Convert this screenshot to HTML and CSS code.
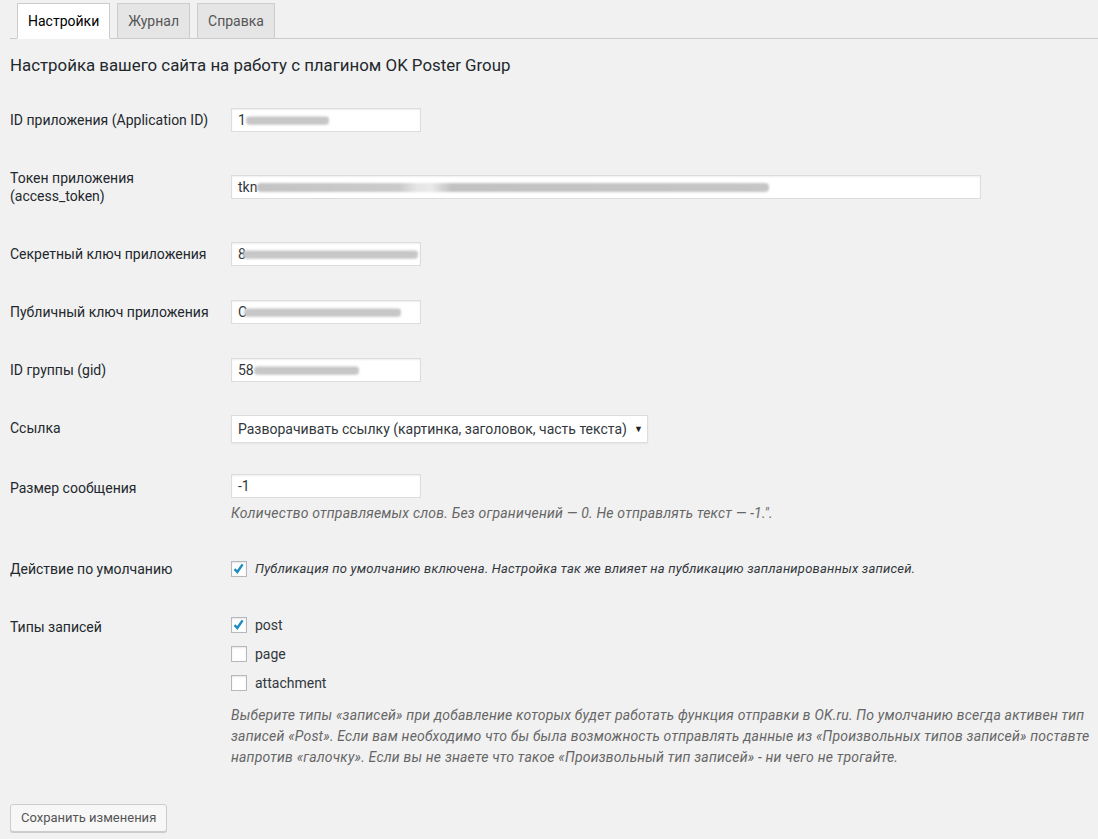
FILE: index.html
```html
<!DOCTYPE html>
<html lang="ru">
<head>
<meta charset="utf-8">
<title>OK Poster Group</title>
<link rel="stylesheet" href="styles.css">
</head>
<body>
<div class="wrap">
  <nav class="tabs">
    <a class="tab active">Настройки</a>
    <a class="tab">Журнал</a>
    <a class="tab">Справка</a>
  </nav>
  <h2 class="title">Настройка вашего сайта на работу с плагином OK Poster Group</h2>
  <table class="form-table">
    <colgroup><col class="c-th"><col></colgroup>
    <tr>
      <th class="nowrap">ID приложения (Application ID)</th>
      <td><div class="field small">1<span class="blur w83"></span></div></td>
    </tr>
    <tr>
      <th>Токен приложения (access_token)</th>
      <td><div class="field large">tkn<span class="blur w512"></span></div></td>
    </tr>
    <tr>
      <th>Секретный ключ приложения</th>
      <td><div class="field small">8<span class="blur w175 over"></span></div></td>
    </tr>
    <tr>
      <th>Публичный ключ приложения</th>
      <td><div class="field small">С<span class="blur w157 over"></span></div></td>
    </tr>
    <tr>
      <th>ID группы (gid)</th>
      <td><div class="field small">58<span class="blur w105"></span></div></td>
    </tr>
    <tr>
      <th>Ссылка</th>
      <td><div class="select">Разворачивать ссылку (картинка, заголовок, часть текста)<span class="arrow">▼</span></div></td>
    </tr>
    <tr>
      <th>Размер сообщения</th>
      <td class="top">
        <div class="field small">-1</div>
        <p class="description first">Количество отправляемых слов. Без ограничений — 0. Не отправлять текст — -1.".</p>
      </td>
    </tr>
    <tr>
      <th>Действие по умолчанию</th>
      <td>
        <label class="option">
          <span class="cb"><svg viewBox="0 0 16 16" width="16" height="16"><path d="M3.6 8.2 L6.3 11 L11.6 3.4" fill="none" stroke="#1e8cbe" stroke-width="2.4"/></svg></span>
          <span class="description inline">Публикация по умолчанию включена. Настройка так же влияет на публикацию запланированных записей.</span>
        </label>
      </td>
    </tr>
    <tr>
      <th>Типы записей</th>
      <td class="top types-cell">
        <label class="option row">
          <span class="cb"><svg viewBox="0 0 16 16" width="16" height="16"><path d="M3.6 8.2 L6.3 11 L11.6 3.4" fill="none" stroke="#1e8cbe" stroke-width="2.4"/></svg></span>
          <span>post</span>
        </label>
        <label class="option row">
          <span class="cb"></span>
          <span>page</span>
        </label>
        <label class="option row">
          <span class="cb"></span>
          <span>attachment</span>
        </label>
        <p class="description types">Выберите типы «записей» при добавление которых будет работать функция отправки в OK.ru. По умолчанию всегда активен тип записей «Post». Если вам необходимо что бы была возможность отправлять данные из «Произвольных типов записей» поставте напротив «галочку». Если вы не знаете что такое «Произвольный тип записей» - ни чего не трогайте.</p>
      </td>
    </tr>
  </table>
  <div class="submit">
    <button class="button" type="button">Сохранить изменения</button>
  </div>
</div>
</body>
</html>
```

FILE: styles.css
```css
html, body {
  margin: 0;
  padding: 0;
  background: #f1f1f1;
}
body {
  font-family: Roboto, "Noto Sans", "Liberation Sans", sans-serif;
  font-size: 14px;
  color: #23282d;
  height: 839px;
  overflow: hidden;
}
.wrap {
  padding-left: 10px;
}
.tabs {
  display: flex;
  gap: 7px;
  padding: 3px 0 0 7px;
  border-bottom: 1px solid #ccc;
}
.tab {
  display: block;
  padding: 5px 10px;
  line-height: 24px;
  font-size: 14px;
  color: #555;
  background: #e5e5e5;
  border: 1px solid #ccc;
  margin-bottom: -1px;
  text-decoration: none;
}
.tab.active {
  background: #fff;
  color: #000;
  border-bottom-color: #fff;
}
.title {
  font-size: 16.85px;
  font-weight: 400;
  line-height: 21px;
  margin: 16px 0 15px;
  color: #23282d;
}
.form-table {
  border-collapse: collapse;
  table-layout: fixed;
  width: 100%;
}
.c-th {
  width: 211px;
}
.form-table th {
  text-align: left;
  font-weight: 400;
  vertical-align: top;
  padding: 20px 11px 20px 0;
  line-height: 18px;
  color: #23282d;
}
.form-table th.nowrap {
  white-space: nowrap;
}
.form-table td {
  vertical-align: middle;
  padding: 15px 0 15px 10px;
  line-height: 18px;
}
.form-table td.top {
  vertical-align: top;
}
.form-table td.types-cell {
  padding-top: 14px;
}
.field {
  box-sizing: border-box;
  height: 24px;
  background: #fff;
  border: 1px solid #ddd;
  box-shadow: inset 0 1px 2px rgba(0, 0, 0, 0.07);
  padding: 0 6px;
  line-height: 22px;
  color: #32373c;
  font-size: 14px;
  white-space: nowrap;
  overflow: hidden;
}
.field.small { width: 190px; }
.field.large { width: 750px; }
.blur {
  display: inline-block;
  vertical-align: middle;
  height: 9px;
  margin-top: -2px;
  border-radius: 4px;
  background: linear-gradient(to bottom, #e2e2e2 0%, #bdbdbd 35%, #d2d2d2 60%, #b8b8b8 80%, #e6e6e6 100%);
  filter: blur(0.9px);
}
.blur.over { margin-left: -3px; }
.w83 { width: 83px; }
.w512 { width: 512px; background: linear-gradient(to right, #c4c4c4 0%, #cbcbcb 28%, #e4e4e4 31%, #eaeaea 34%, #c2c2c2 38%, #c6c6c6 100%); }
.w175 { width: 175px; }
.w157 { width: 157px; }
.w105 { width: 105px; }
.select {
  display: inline-flex;
  align-items: center;
  box-sizing: border-box;
  height: 28px;
  margin: 1px 0;
  background: #fff;
  border: 1px solid #ddd;
  box-shadow: 0 1px 2px rgba(0, 0, 0, 0.05);
  padding: 0 4px 0 6px;
  color: #32373c;
  font-size: 14px;
  white-space: nowrap;
}
.arrow {
  font-size: 9px;
  margin-left: 7px;
  color: #222;
}
.description {
  font-size: 14px;
  font-style: italic;
  letter-spacing: 0.2px;
  color: #666;
  line-height: 21px;
  margin: 0;
}
.description.first {
  margin-top: 5px;
  padding-bottom: 1px;
}
.description.inline {
  font-size: 13px;
  letter-spacing: 0.2px;
  line-height: 18px;
  color: #32373c;
}
.description.types {
  margin-top: 10px;
}
.option {
  display: flex;
  align-items: center;
  gap: 8px;
  color: #32373c;
}
.option.row {
  height: 25px;
  margin-bottom: 4px;
}
.cb {
  box-sizing: border-box;
  width: 16px;
  height: 16px;
  flex: none;
  background: #fff;
  border: 1px solid #b4b9be;
  box-shadow: inset 0 1px 2px rgba(0, 0, 0, 0.1);
  position: relative;
}
.cb svg {
  position: absolute;
  left: -1px;
  top: -1px;
}
.submit {
  padding-top: 21px;
}
.button {
  font-family: Roboto, "Noto Sans", "Liberation Sans", sans-serif;
  font-size: 13px;
  height: 28px;
  line-height: 26px;
  padding: 0 10px;
  color: #555;
  background: #f7f7f7;
  border: 1px solid #ccc;
  border-radius: 3px;
  box-shadow: 0 1px 0 #ccc;
  cursor: pointer;
}
```
